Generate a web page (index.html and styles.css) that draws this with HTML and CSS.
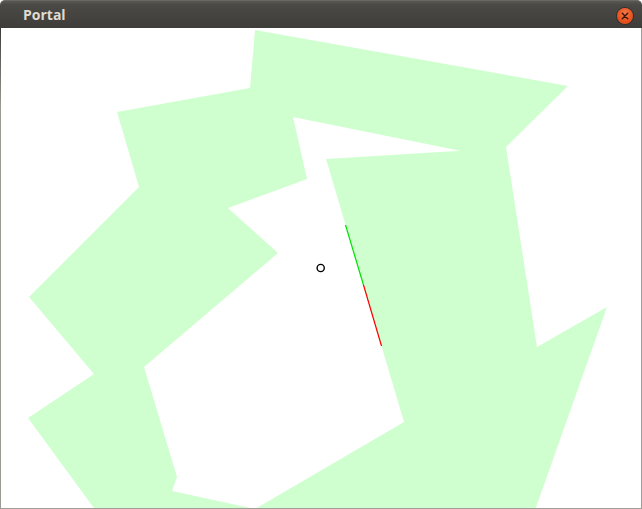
FILE: index.html
```html
<!DOCTYPE html>
<html>
<head>
<meta charset="utf-8">
<link rel="stylesheet" href="styles.css">
</head>
<body>
<div class="window">
  <div class="titlebar">
    <span class="title">Portal</span>
    <span class="close">
      <svg width="16" height="16" viewBox="0 0 16 16">
        <path d="M5.3 5.3 L10.7 10.7 M10.7 5.3 L5.3 10.7" stroke="#3a1608" stroke-width="1.4" stroke-linecap="round"/>
      </svg>
    </span>
  </div>
  <div class="canvas">
    <svg class="scene" width="640" height="480" viewBox="1 28 640 480">
      <polygon fill="#cfffcf" points="255,30 568,86 506,147 537,347 607,307 528,530 260,530 255,509 404,422 326,159 460,150.7 293,117 307,179 228,208 278,253 144,367 177,477 172,491 255,509 260,530 110,530 28,418 94,374 29,297 139,187 117,112 250,88"/>
      <line x1="345.5" y1="225" x2="363.5" y2="285" stroke="#00e000" stroke-width="1.2"/>
      <line x1="363.5" y1="285" x2="381.5" y2="346" stroke="#ff0000" stroke-width="1.2"/>
      <circle cx="320.7" cy="268" r="3.6" fill="none" stroke="#000" stroke-width="1.4"/>
    </svg>
  </div>
</div>
</body>
</html>
```
FILE: styles.css
```css
html, body {
  margin: 0;
  padding: 0;
  background: #ffffff;
}
.window {
  width: 642px;
  height: 509px;
  display: flex;
  flex-direction: column;
  overflow: hidden;
}
.titlebar {
  height: 28px;
  flex: 0 0 28px;
  box-sizing: border-box;
  background: linear-gradient(#5a5853 0px, #4b4945 4px, #3e3d39 27px);
  border-radius: 5px 5px 0 0;
  display: flex;
  align-items: center;
  padding: 0 9px 0 23px;
  border-top: 1px solid #6a6863;
}
.title {
  font-family: "Open Sans", "DejaVu Sans", sans-serif;
  font-weight: 700;
  font-size: 14px;
  color: #dfdbd2;
  flex: 1;
  margin-top: -1px;
}
.close {
  width: 16px;
  height: 16px;
  border-radius: 50%;
  background: radial-gradient(circle at 50% 35%, #f67a4c 0%, #e9541f 55%, #d1461a 100%);
  box-shadow: 0 0 0 1px #2f2e2b;
  display: flex;
  align-items: center;
  justify-content: center;
  margin-top: 2px;
}
.canvas {
  flex: 1;
  display: flex;
  border-left: 1px solid #9d9b96;
  border-right: 1px solid #a09e99;
  border-bottom: 1px solid #a09e99;
  background: #ffffff;
  position: relative;
}
.canvas::before {
  content: "";
  position: absolute;
  left: -1px;
  top: 0;
  width: 1px;
  height: 80px;
  background: linear-gradient(#3c3b37, #9d9b96);
}
.scene {
  display: block;
}
```
